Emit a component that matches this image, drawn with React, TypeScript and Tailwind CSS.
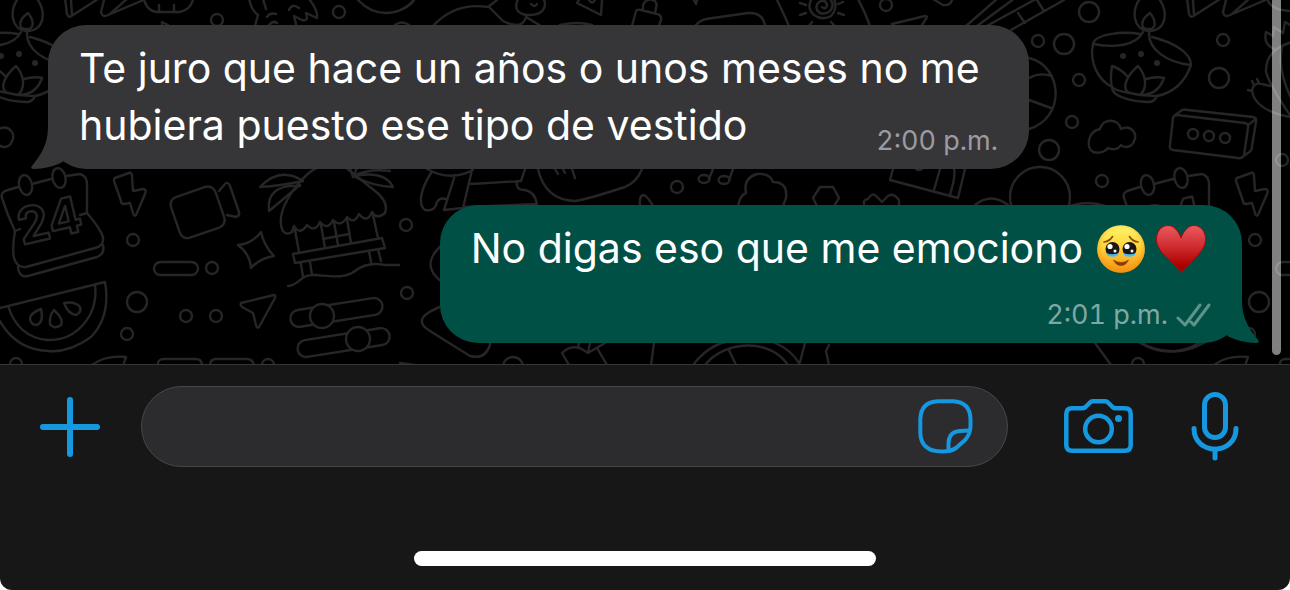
import type { ReactNode } from 'react'

function CircleDots({ points, r }: { points: number[][]; r: number }) {
  return (
    <>
      {points.map(([x, y]) => (
        <circle key={`${x}-${y}`} cx={x} cy={y} r={r} />
      ))}
    </>
  )
}

function Wallpaper() {
  return (
    <svg
      className="absolute inset-0 size-full"
      viewBox="0 0 1290 364"
      preserveAspectRatio="xMidYMid slice"
      fill="none"
      stroke="#262626"
      strokeWidth="2.4"
      strokeLinecap="round"
      strokeLinejoin="round"
      aria-hidden="true"
    >
      <defs>
        <g id="motifs">
          {/* oil lamp */}
          <path d="M20 -4C8 10 11 30 27 31C44 31 48 12 35 -4M28 13C18 20 18 29 26 29C35 30 34 20 28 13Z" />
          <path d="M21 32C14 46 -8 48 -28 44M27 32C26 50 45 62 68 65M18 34C0 31 -27 34 -29 44C-33 62 -24 80 -10 87M30 37C50 42 69 52 69 65C62 85 50 93 35 96" />
          <path d="M-10 87C-12 80 -11 72 -10 66Q-1 69 5 76M16 66C2 78 0 90 8 93L18 95C26 88 24 75 16 66ZM24 79Q34 76 42 78C38 90 30 95 18 95M-10 87Q-6 91 8 93M18 95L35 96Q33 101 28 102C14 102 -10 98 -10 87" />
          <g fill="#262626" stroke="none">
            <CircleDots points={[[1, 56], [19, 54], [35, 63]]} r={3} />
          </g>
          {/* pennants */}
          <path d="M65 -2L67 14Q69 19 73 15L98 -1M71 0L72 15M104 0L101 12Q102 18 108 15L146 -1M110 14L128 -2" />
          {/* cloud */}
          <path d="M-29 152C-36 148 -35 132 -22 129C-19 118 -4 118 -1 129C9 124 16 134 12 141C10 148 2 148 -1 145C-4 150 -10 150 -14 148C-18 153 -25 153 -29 152Z" />
          {/* calendar */}
          <path d="M18 187L8 190Q0 192 2 198Q7 214 15 231Q12 248 14 258Q17 268 26 267L95 248Q104 246 103 237Q100 228 87 213V188Q88 176 80 174L66 176M32 184L51 179M15 231L20 229M80 215L87 213M18 267Q19 278 28 276L97 257Q105 254 103 245" />
          <ellipse cx="25.500" cy="185" rx="6.500" ry="10" transform="rotate(-12 25.500 185)" />
          <ellipse cx="59" cy="178" rx="6.500" ry="10" transform="rotate(-12 59 178)" />
          <text
            x="22"
            y="245"
            transform="rotate(-13 22 245)"
            className="font-['Inter',sans-serif] text-[50px] font-bold"
          >
            24
          </text>
          {/* bolt */}
          <path d="M115 178L129 173Q132 172 132 176L133 191L143 189Q147 189 145 194L136 215Q134 217 133 213L130 203L124 204Q121 204 121 201L114 181Q114 178 115 178Z" />
          <rect x="154" y="262" width="44" height="13" rx="6.500" />
          <CircleDots points={[[133, 240], [127, 334], [16, 364], [101, 40]]} r={6} />
          <CircleDots points={[[137, 302], [97, 78]]} r={10} />
          {/* watermelon */}
          <path d="M-4 309L105 282Q111 316 91 337Q69 353 48 351Q14 350 -3 316M8 306Q18 337 47 340Q75 341 90 315Q97 301 95 285" />
          <path d="M41 309Q30 313 30 319Q31 325 37 325Q44 322 41 309ZM54 310Q49 316 50 324Q54 330 61 325Q64 319 54 310ZM64 303Q68 314 76 315Q82 312 80 307Q75 301 64 303Z" />
          <path d="M92 365Q105 355 126 357L123 366M158 366Q157 359 164 359H196Q202 359 202 366M210 366Q210 359 216 359H247Q253 359 254 366" />
        </g>
      </defs>
      <use href="#motifs" />
      <use href="#motifs" x="1122" />

      {/* top band */}
      <path d="M144 0Q148 12 158 12H180Q190 10 193 0M159 5V12M174 5V11M162 25V22L168 25" />
      <path d="M249 -2Q251 10 258 15L255 26M263 -1L266 9M309 -1Q318 10 317 18L306 13Q309 22 302 20L294 16L296 24M267 17Q270 12 276 14M289 10Q292 3 299 8M269 25Q273 20 277 23M358 0Q370 13 386 13Q403 13 414 0M395 25Q402 20 409 25" />
      <path d="M400 10Q410 6 414 0M433 26Q455 2 488 7L497 0M489 7L503 21Q510 25 518 25Q524 24 526 17L541 26M518 -1Q512 12 526 15Q545 16 545 3Q544 -2 540 -4M531 4Q535 8 537 4M577 3L601 15L602 0M577 3L580 -2M589 0Q592 5 595 0M560 25Q578 21 592 25" />
      <path d="M632 26L636 11Q637 9 641 10L657 14Q662 15 661 20L659 26M643 10V5Q646 -2 653 0Q658 2 656 8L655 13M694 0L696 4L697 0M696 25Q699 21 706 19L748 13Q763 12 765 26M777 0Q783 12 789 26" />
      <path d="M822 7Q825 10 827 6Q827 0 821 1Q815 4 817 10Q821 16 829 12Q836 5 829 -2M812 -2Q806 8 814 15Q822 21 831 16Q838 8 834 -1M800 3L806 5M800 15L806 13M838 4L843 2M838 13L844 15M812 22L809 26M831 22L835 26" />
      <path d="M858 -1Q865 12 870 26M933 -1L943 5Q950 6 952 0M892 24L925 16Q928 16 926 19L922 25M966 26L997 -1M977 26L1015 -2M983 28L1036 -1M1011 30L1064 0M1018 13L1025 23M1037 0L1044 11" />
      <CircleDots points={[[217, 20], [339, 12], [886, 5], [1038, 41], [1079, 80], [1072, 122], [1102, 181], [1282, 160], [677, 187], [212, 268], [186, 316], [216, 316], [406, 225], [407, 293], [268, 365]]} r={6} />
      <CircleDots points={[[1089, 12], [1064, 44], [1049, 150], [513, 367]]} r={10} />
      <path d="M1029 58C1063 66 1066 118 1029 129M1029 78Q1040 72 1052 76M1029 100L1051 108" />
      <circle cx="1040" cy="197" r="30" />

      {/* speaker box and bird on the right */}
      <path d="M1177 115L1245 123Q1249 124 1248 128L1244 155Q1243 159 1238 158L1173 150Q1169 149 1170 145L1173 118Q1174 115 1177 115ZM1174 116L1182 110Q1184 109 1188 110L1253 117Q1257 118 1256 122L1252 146Q1252 151 1248 153L1241 158M1248 125L1256 119" />
      <CircleDots points={[[1193, 134], [1209, 136], [1225, 138]]} r={5} />
      <path d="M1267 -2Q1270 11 1292 11M1274 49Q1263 44 1266 32L1273 36L1274 27L1283 33L1285 22L1292 26M1292 42Q1265 50 1266 72Q1270 86 1292 118M1282 47Q1277 70 1292 100M1252 90Q1254 82 1262 84L1270 86M1252 90Q1254 110 1290 117M1248 90L1252 91M1252 81L1254 85M1257 79L1259 83" />

      {/* middle band */}
      <rect x="174" y="191" width="47" height="43" rx="8" transform="rotate(-19 197 212)" />
      <path d="M219 191L225 184Q228 181 230 186L239 212Q240 216 236 217L227 215M261 232Q264 246 274 256Q260 258 251 268Q250 254 238 245Q252 244 261 232ZM241 303L274 295Q276 295 275 298L259 327Q257 329 256 325L253 313L242 307Q240 305 241 303Z" />
      <path d="M303 181Q280 166 260 187Q280 186 303 181M300 186Q266 184 269 211L300 185M353 177L350 168M353 177L357 168M353 176Q370 168 390 171M353 176Q385 170 393 187Q372 186 353 176" />
      <path d="M320 167C305 170 278 205 281 225Q283 237 292 232L294 226Q300 236 307 225Q315 233 320 222Q328 231 333 220Q341 228 347 217Q354 225 359 214Q367 224 372 212Q377 220 385 213Q389 202 375 191L345 167" />
      <path d="M295 230L299 252M321 225L325 248M334 222L338 245M347 219L351 243M373 215L378 238M323 239L349 234M293 254L382 238L385 248L295 263ZM301 264L303 277M310 262L312 275M369 251L371 262M378 249L381 261M288 286C300 285 300 274 315 275S345 279 355 271S375 263 385 265L399 265" />
      <rect x="290" y="304" width="93" height="17" rx="8.500" transform="rotate(-9 336 313)" />
      <rect x="297" y="334" width="93" height="17" rx="8.500" transform="rotate(-9 344 342)" />
      <circle cx="322" cy="316" r="12" fill="#000" />
      <circle cx="358" cy="339" r="12" fill="#000" />
      <path d="M427 169Q450 182 473 170M431 173C420 190 418 205 425 210Q435 212 437 202Q440 197 446 199M455 175L444 210L463 208L472 170M471 184L521 181L525 169M517 181Q515 190 525 190Q535 192 537 204L465 207M538 169Q545 200 575 201Q585 200 625 187Q637 182 642 169M555 169L558 174M563 169L565 173M572 169L575 178M640 205Q639 195 644 195Q648 197 653 206" />
      <ellipse cx="704" cy="179" rx="5.500" ry="4" />
      <ellipse cx="724" cy="180" rx="5.500" ry="4" />
      <path d="M709 179L713 169M729 180L733 169M738 206Q740 195 746 193Q743 178 757 174Q770 173 773 182Q788 182 786 198L783 206M817 206L813 198L820 187H833L839 198L834 206M864 204Q863 200 868 199Q872 192 876 196L882 202L888 196Q893 192 899 200V205M893 169L890 180L958 198L965 169M940 169L934 190M954 169Q956 175 950 195M916 169Q919 171 922 169M975 205Q991 192 1008 205M1070 206Q1088 200 1105 206" />
      <path d="M442 245Q419 265 442 282M445 305Q408 318 430 331L470 356Q485 360 490 345V342M562 353Q570 345 580 348L588 353L605 343M562 353L569 365M579 343L578 348M597 348L607 365M590 343L588 353M654 343L651 365M693 365Q712 340 740 340M705 365C725 340 770 338 788 365M775 343Q792 350 800 365M805 343L800 362M729 350L736 365M829 345L826 351L829 365M400 363L414 365M1095 343L1111 365M1140 343Q1170 360 1199 343" />
    </svg>
  )
}

function TearyFace() {
  return (
    <svg viewBox="0 0 48 48" className="size-12 shrink-0" role="img" aria-label="🥹">
      <defs>
        <linearGradient id="face" x1="0" y1="0" x2="0" y2="1">
          <stop offset="0" stopColor="#fff56a" />
          <stop offset=".45" stopColor="#ffd63c" />
          <stop offset="1" stopColor="#f78f14" />
        </linearGradient>
        <radialGradient id="rim" cx=".5" cy=".45" r=".55">
          <stop offset=".7" stopColor="#f7a11a" stopOpacity="0" />
          <stop offset="1" stopColor="#f0920f" stopOpacity=".7" />
        </radialGradient>
      </defs>
      <circle cx="24" cy="24" r="23.800" fill="url(#face)" />
      <circle cx="24" cy="24" r="23.800" fill="url(#rim)" />
      <path d="M7 17Q13 16 15.500 11.500M41 17Q35 16 32.500 11.500" fill="none" stroke="#8a4a05" strokeWidth="1.600" strokeLinecap="round" />
      <circle cx="15.500" cy="24" r="7" fill="#1c1614" />
      <circle cx="32.500" cy="24" r="7" fill="#1c1614" />
      <path d="M9 28Q15 30.500 22 28Q21 31.500 15.500 31.800Q10 31.500 9 28ZM26 28Q33 30.500 39 28Q38 31.500 32.500 31.800Q27 31.500 26 28Z" fill="#45bdf2" />
      <g fill="#fff">
        <circle cx="13" cy="21.500" r="2.600" />
        <circle cx="30" cy="21.500" r="2.600" />
        <circle cx="18" cy="26" r="1.500" />
        <circle cx="35" cy="26" r="1.500" />
      </g>
      <path d="M16.500 35Q24 40 31.500 35Q29 40.500 24 40.500Q19 40.500 16.500 35Z" fill="#8a3b08" stroke="#8a3b08" strokeWidth=".6" strokeLinejoin="round" />
    </svg>
  )
}

function Heart() {
  return (
    <svg viewBox="0 0 52 50" className="h-[50px] w-[52px] shrink-0" role="img" aria-label="♥️">
      <defs>
        <linearGradient id="heart" x1="0" y1="0" x2="0" y2="1">
          <stop offset="0" stopColor="#ea5a5e" />
          <stop offset=".45" stopColor="#cf2c30" />
          <stop offset=".85" stopColor="#ad0000" />
          <stop offset="1" stopColor="#a00000" />
        </linearGradient>
      </defs>
      <path
        d="M26 14C23 6 18 1.500 13 1.500C6 1.500 1.500 8 1.500 15C1.500 28 16 36 26 48.500C36 36 50.500 28 50.500 15C50.500 8 46 1.500 39 1.500C34 1.500 29 6 26 14Z"
        fill="url(#heart)"
        stroke="#b3060b"
        strokeWidth="1"
      />
    </svg>
  )
}

function Tail({ side }: { side: 'left' | 'right' }) {
  return (
    <svg
      viewBox="0 0 40 42"
      className={
        side === 'left'
          ? 'absolute bottom-0 -left-[17px] h-[42px] w-10 text-[#363638]'
          : 'absolute -right-[17px] bottom-0 h-[42px] w-10 -scale-x-100 text-[#005046]'
      }
      fill="currentColor"
      aria-hidden="true"
    >
      <path d="M17 0C17 18 9 29 0.500 39.500Q-0.500 42 2.500 42C13 42 24 39 31.500 35L40 20V0Z" />
    </svg>
  )
}

function Bubble({ side, time, children }: { side: 'left' | 'right'; time: ReactNode; children: ReactNode }) {
  return (
    <article
      className={
        side === 'right'
          ? 'relative grid max-w-[981px] self-end rounded-[38px] bg-[#005046] px-[31px] pt-[15px] pb-3 text-white'
          : 'relative grid max-w-[981px] self-start rounded-[38px] bg-[#363638] px-[31px] pt-[15px] pb-3 text-white'
      }
    >
      <Tail side={side} />
      {children}
      {time}
    </article>
  )
}

export default function App() {
  return (
    <div className="flex min-h-screen flex-col bg-white font-['Inter',sans-serif]">
      <main className="relative overflow-hidden bg-black">
        <Wallpaper />
        <div className="relative flex flex-col gap-9 px-12 pt-[25px] pb-[21px]">
          <Bubble
            side="left"
            time={
              <time className="relative col-start-1 row-start-1 self-end justify-self-end text-[27px] leading-8 text-[#9c9ba3] tabular-nums">
                2:00 p.m.
              </time>
            }
          >
            <p className="relative col-start-1 row-start-1 pb-[3px] text-[41px] leading-[57px]">
              Te juro que hace un años o unos meses no me hubiera puesto ese tipo de vestido
            </p>
          </Bubble>
          <Bubble
            side="right"
            time={
              <div className="relative mt-[22px] flex items-center gap-2 justify-self-end text-[#80a8a3]">
                <time className="text-[27px] leading-8 tabular-nums">2:01 p.m.</time>
                <svg viewBox="0 0 35 24" className="h-6 w-[35px]" fill="none" stroke="#5f928b" strokeWidth="3" strokeLinecap="round" strokeLinejoin="round" role="img" aria-label="Entregado">
                  <path d="M2 15L9 22L24 2M15 19L18 22L33 2" />
                </svg>
              </div>
            }
          >
            <p className="relative flex items-center pr-1 text-[41px] leading-[57px]">
              <span className="mr-3.5">No digas eso que me emociono</span>
              <span className="flex items-center gap-2.5">
                <TearyFace />
                <Heart />
              </span>
            </p>
          </Bubble>
        </div>
        <div className="absolute top-0 right-[9px] h-[355px] w-[9px] rounded-b-full bg-white/50" />
      </main>

      <footer className="flex grow flex-col justify-between rounded-b-xl border-t border-[#363636] bg-[#171717] pt-[21px] pb-6 text-[#1598df]">
        <form className="flex items-center pr-[51px] pl-10" onSubmit={(e) => e.preventDefault()}>
          <button type="button" aria-label="Adjuntar" className="mr-[41px] shrink-0">
            <svg viewBox="0 0 60 60" className="size-[60px]" fill="none" stroke="currentColor" strokeWidth="6" strokeLinecap="round">
              <path d="M30 3V57M3 30H57" />
            </svg>
          </button>
          <div className="mr-14 flex h-[81px] grow items-center rounded-full border border-[#48484a] bg-[#2c2c2e] pr-[34px] pl-8">
            <input aria-label="Mensaje" className="min-w-0 grow bg-transparent text-[41px] text-white outline-none" />
            <button type="button" aria-label="Stickers" className="shrink-0">
              <svg viewBox="0 0 55 55" className="size-[55px]" fill="none" stroke="currentColor" strokeWidth="4" strokeLinejoin="round">
                <path d="M20 2.300H35Q52 3 52.500 20V28Q52 36 46.500 41.500L38 49Q33 52.500 25 52.500Q3 53 2.300 34V20Q3 3 20 2.300Z" />
                <path d="M51.500 31.500C37 31.500 31 33 30.500 44V52" />
              </svg>
            </button>
          </div>
          <button type="button" aria-label="Cámara" className="mr-[58px] shrink-0">
            <svg viewBox="0 0 69 55" className="h-[55px] w-[69px]" fill="none" stroke="currentColor" strokeWidth="4.500" strokeLinejoin="round">
              <path d="M8 9.300H18Q20 9.300 21.500 8L25.500 4Q27 2.300 29 2.300H41Q43 2.300 44.500 4L48.500 8Q50 9.300 52 9.300H61Q66.700 9.300 66.700 15V46Q66.700 51.700 61 51.700H8Q2.300 51.700 2.300 46V15Q2.300 9.300 8 9.300Z" />
              <circle cx="34.500" cy="30" r="13.300" />
              <circle cx="54.500" cy="19.500" r="3.500" fill="currentColor" stroke="none" />
            </svg>
          </button>
          <button type="button" aria-label="Grabar audio" className="shrink-0">
            <svg viewBox="0 1 48 70" className="h-[70px] w-12" fill="none" stroke="currentColor" strokeWidth="5" strokeLinecap="round">
              <rect x="13.500" y="3.500" width="21" height="43" rx="10.500" />
              <path d="M3 37.500C3 65 45 65 45 37.500M24 58V67" />
            </svg>
          </button>
        </form>
        <div className="h-[15px] w-[462px] self-center rounded-full bg-white" />
      </footer>
    </div>
  )
}
